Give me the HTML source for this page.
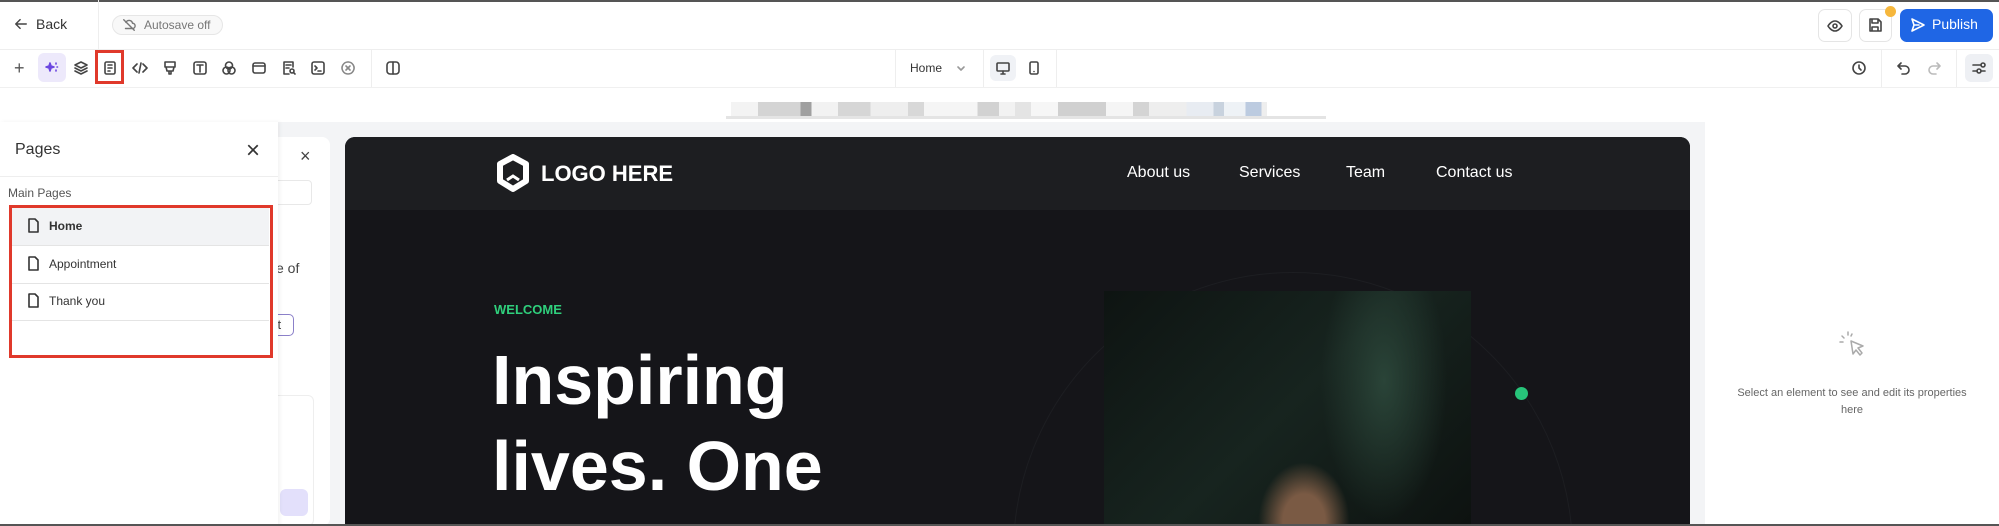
<!DOCTYPE html>
<html style="overflow:hidden;height:526px"><head><meta charset="utf-8"><style>
*{box-sizing:border-box;margin:0;padding:0}
body{width:1999px;height:526px;overflow:hidden;background:#fff;font-family:"Liberation Sans",sans-serif;position:relative;color:#222}
.a{position:absolute}
.ic{position:absolute;width:16px;height:16px;fill:none;stroke:#444;stroke-width:1.6;stroke-linecap:round;stroke-linejoin:round}
</style></head><body>
<div class="a" style="left:0;top:0;width:1999px;height:2px;background:#555"></div>
<!-- top bar -->
<svg class="ic" style="left:14px;top:17px;width:14px;height:14px" viewBox="0 0 16 16"><path d="M14 8H2M7 3L2 8l5 5"/></svg>
<div class="a" style="left:36px;top:16px;font-size:14px;color:#333">Back</div>
<div class="a" style="left:98px;top:0;width:1px;height:49px;background:#eee"></div>
<div class="a" style="left:112px;top:15px;width:111px;height:20px;border:1px solid #e6e6e6;border-radius:10px;background:#f8f8f8"></div>
<svg class="ic" style="left:122px;top:18px;width:14px;height:14px;stroke:#777" viewBox="0 0 16 16"><path d="M4 12h8a3 3 0 0 0 0-6 4 4 0 0 0-7.5-1M2 2l12 12"/></svg>
<div class="a" style="left:144px;top:18px;font-size:12px;color:#777">Autosave off</div>
<div class="a" style="left:1818px;top:9px;width:34px;height:33px;border:1px solid #e5e5e5;border-radius:7px"></div>
<svg class="ic" style="left:1827px;top:18px" viewBox="0 0 16 16"><path d="M1 8s3-5 7-5 7 5 7 5-3 5-7 5-7-5-7-5z"/><circle cx="8" cy="8" r="2"/></svg>
<div class="a" style="left:1859px;top:9px;width:33px;height:33px;border:1px solid #e5e5e5;border-radius:7px"></div>
<svg class="ic" style="left:1867px;top:17px" viewBox="0 0 16 16"><path d="M3 2h8l3 3v9H3zM5 2v4h6V2M5 14v-4h6v4"/></svg>
<div class="a" style="left:1885px;top:6px;width:11px;height:11px;border-radius:50%;background:#f6b73c"></div>
<div class="a" style="left:1900px;top:9px;width:93px;height:33px;border-radius:7px;background:#1f66e5"></div>
<svg class="ic" style="left:1910px;top:17px;stroke:#fff" viewBox="0 0 16 16"><path d="M2 2l12 6-12 6 2-6zM4 8h5"/></svg>
<div class="a" style="left:1932px;top:16px;font-size:14px;color:#fff">Publish</div>
<div class="a" style="left:0;top:49px;width:1999px;height:1px;background:#eee"></div>
<!-- toolbar -->
<div class="a" style="left:38px;top:53px;width:28px;height:29px;border-radius:6px;background:#ede9fb"></div>
<div class="a" style="left:95px;top:50px;width:29px;height:34px;border:3px solid #e0392b"></div>
<div class="a" style="left:14px;top:58px;font-size:18px;color:#555">+</div>
<svg class="ic" style="left:44px;top:60px;stroke:#6b46e0;fill:#6b46e0" viewBox="0 0 16 16"><path d="M6 3l1 3 3 1-3 1-1 3-1-3-3-1 3-1zM12 3v1M12 10v1M13 7h.5"/></svg>
<svg class="ic" style="left:73px;top:60px" viewBox="0 0 16 16"><path d="M8 2l6 3-6 3-6-3zM2 8l6 3 6-3M2 11l6 3 6-3"/></svg>
<svg class="ic" style="left:102px;top:60px" viewBox="0 0 16 16"><rect x="3" y="2" width="10" height="12" rx="1.5"/><path d="M6 5h4M6 8h4M6 11h2"/></svg>
<svg class="ic" style="left:132px;top:60px" viewBox="0 0 16 16"><path d="M5 4L1 8l4 4M11 4l4 4-4 4M9 3L7 13"/></svg>
<svg class="ic" style="left:162px;top:60px" viewBox="0 0 16 16"><path d="M3 2h10v5H3zM4 7l1 4h6l1-4M7 11v3h2v-3"/></svg>
<svg class="ic" style="left:192px;top:60px" viewBox="0 0 16 16"><rect x="2" y="2" width="12" height="12" rx="2"/><path d="M5 5h6M8 5v7"/></svg>
<svg class="ic" style="left:221px;top:60px" viewBox="0 0 16 16"><circle cx="8" cy="5.5" r="3.5"/><circle cx="5.5" cy="10.5" r="3.5"/><circle cx="10.5" cy="10.5" r="3.5"/></svg>
<svg class="ic" style="left:251px;top:60px" viewBox="0 0 16 16"><rect x="2" y="3" width="12" height="10" rx="2"/><path d="M2 6h12"/></svg>
<svg class="ic" style="left:281px;top:60px" viewBox="0 0 16 16"><path d="M12 7V2H3v12h5M5 5h5M5 8h3"/><circle cx="11" cy="11" r="2"/><path d="M12.5 12.5L14 14"/></svg>
<svg class="ic" style="left:310px;top:60px" viewBox="0 0 16 16"><rect x="2" y="2" width="12" height="12" rx="2"/><path d="M5 6l2 2-2 2M8 11h3"/></svg>
<svg class="ic" style="left:340px;top:60px;stroke:#888" viewBox="0 0 16 16"><path d="M8 2a6 6 0 1 0 0.1 0M6 6l4 4M10 6l-4 4"/></svg>
<div class="a" style="left:371px;top:50px;width:1px;height:37px;background:#eee"></div>
<svg class="ic" style="left:385px;top:60px" viewBox="0 0 16 16"><rect x="2" y="2" width="12" height="12" rx="3"/><path d="M8 2v12"/></svg>
<div class="a" style="left:895px;top:50px;width:1px;height:37px;background:#eee"></div>
<div class="a" style="left:910px;top:61px;font-size:12px;color:#333">Home</div>
<svg class="ic" style="left:956px;top:63px;width:10px;height:10px;stroke:#999" viewBox="0 0 10 10"><path d="M2 4l3 3 3-3"/></svg>
<div class="a" style="left:983px;top:50px;width:1px;height:37px;background:#eee"></div>
<div class="a" style="left:990px;top:55px;width:26px;height:26px;border-radius:6px;background:#f0f2f6"></div>
<svg class="ic" style="left:995px;top:60px" viewBox="0 0 16 16"><rect x="2" y="3" width="12" height="8" rx="1"/><path d="M6 14h4M8 11v3"/></svg>
<svg class="ic" style="left:1026px;top:60px" viewBox="0 0 16 16"><rect x="4" y="2" width="8" height="12" rx="1.5"/><path d="M8 11.5h.01"/></svg>
<div class="a" style="left:1056px;top:50px;width:1px;height:37px;background:#eee"></div>
<svg class="ic" style="left:1851px;top:60px" viewBox="0 0 16 16"><circle cx="8" cy="8" r="6"/><path d="M8 5v3l2 2"/></svg>
<div class="a" style="left:1881px;top:50px;width:1px;height:37px;background:#eee"></div>
<svg class="ic" style="left:1896px;top:60px" viewBox="0 0 16 16"><path d="M5 3L2 6l3 3M2 6h7a4 4 0 0 1 0 8H6"/></svg>
<svg class="ic" style="left:1926px;top:60px;stroke:#bbb" viewBox="0 0 16 16"><path d="M11 3l3 3-3 3M14 6H7a4 4 0 0 0 0 8h3"/></svg>
<div class="a" style="left:1956px;top:50px;width:1px;height:37px;background:#eee"></div>
<div class="a" style="left:1965px;top:54px;width:28px;height:28px;border-radius:6px;background:#eef0f4"></div>
<svg class="ic" style="left:1971px;top:60px" viewBox="0 0 16 16"><path d="M2 5h8M2 11h4M10 11h4"/><circle cx="12" cy="5" r="2"/><circle cx="8" cy="11" r="2"/></svg>
<div class="a" style="left:0;top:87px;width:1999px;height:1px;background:#f0f0f0"></div>
<!-- pixel strip -->
<div class="a" style="left:726px;top:116px;width:600px;height:3px;background:#e4e4e4"></div>
<div class="a" style="left:731px;top:102px;width:536px;height:14px;background:linear-gradient(90deg,#f3f3f3 0 5%,#d4d4d4 5% 13%,#a0a0a0 13% 15%,#f2f2f2 15% 20%,#d6d6d6 20% 26%,#eee 26% 33%,#d8d8d8 33% 36%,#f5f5f5 36% 46%,#d2d2d2 46% 50%,#f2f2f2 50% 53%,#e4e4e4 53% 56%,#f6f6f6 56% 61%,#d0d0d0 61% 70%,#f5f5f5 70% 75%,#d4d4d4 75% 78%,#eee 78% 85%,#e8ecf2 85% 90%,#c8d2de 90% 92%,#eef2f6 92% 96%,#bccbe0 96% 99%,#eee 99%)"></div>
<!-- canvas area -->
<div class="a" style="left:0;top:122px;width:1705px;height:404px;background:#f3f4f6"></div>
<div class="a" style="left:1705px;top:122px;width:294px;height:404px;background:#fff"></div>
<!-- secondary panel -->
<div class="a" style="left:250px;top:137px;width:80px;height:389px;background:#fff;border-radius:8px"></div>
<div class="a" style="left:300px;top:146px;font-size:18px;color:#444">×</div>
<div class="a" style="left:270px;top:180px;width:42px;height:25px;border:1px solid #e8e8e8;border-radius:4px"></div>
<div class="a" style="left:276px;top:260px;font-size:14px;color:#444">e of</div>
<div class="a" style="left:260px;top:314px;width:34px;height:22px;border:1px solid #8b80c9;border-radius:5px;font-size:13px;padding:2px 0 0 10px;color:#444">ct</div>
<div class="a" style="left:262px;top:395px;width:52px;height:131px;border:1px solid #eee;border-radius:6px"></div>
<div class="a" style="left:280px;top:489px;width:28px;height:27px;background:#e3e0fb;border-radius:6px"></div>
<!-- pages panel -->
<div class="a" style="left:0;top:122px;width:278px;height:404px;background:#fff;box-shadow:2px 0 4px rgba(0,0,0,.05)"></div>
<div class="a" style="left:15px;top:141px;font-size:16px;color:#333">Pages</div>
<div class="a" style="left:246px;top:137px;font-size:24px;color:#333">×</div>
<div class="a" style="left:0;top:176px;width:278px;height:1px;background:#eee"></div>
<div class="a" style="left:8px;top:186px;font-size:12px;color:#555">Main Pages</div>
<div class="a" style="left:12px;top:208px;width:257px;height:37px;background:#f2f3f5"></div>
<div class="a" style="left:12px;top:245px;width:257px;height:1px;background:#e4e4e4"></div>
<div class="a" style="left:12px;top:283px;width:257px;height:1px;background:#e4e4e4"></div>
<div class="a" style="left:12px;top:320px;width:257px;height:1px;background:#e4e4e4"></div>
<svg class="ic" style="left:27px;top:218px;width:13px;height:15px;stroke:#333" viewBox="0 0 13 15"><path d="M2 1h6l3 3v10H2z"/></svg>
<div class="a" style="left:49px;top:219px;font-size:12px;font-weight:bold;color:#333">Home</div>
<svg class="ic" style="left:27px;top:256px;width:13px;height:15px;stroke:#333" viewBox="0 0 13 15"><path d="M2 1h6l3 3v10H2z"/></svg>
<div class="a" style="left:49px;top:257px;font-size:12px;color:#333">Appointment</div>
<svg class="ic" style="left:27px;top:293px;width:13px;height:15px;stroke:#333" viewBox="0 0 13 15"><path d="M2 1h6l3 3v10H2z"/></svg>
<div class="a" style="left:49px;top:294px;font-size:12px;color:#333">Thank you</div>
<div class="a" style="left:9px;top:205px;width:264px;height:153px;border:3px solid #e0392b"></div>
<!-- dark canvas -->
<div class="a" style="left:345px;top:137px;width:1345px;height:387px;background:#151519;border-radius:10px 10px 0 0;overflow:hidden">
 <div class="a" style="left:0;top:0;width:1345px;height:73px;background:#1d1e21"></div>
 <svg class="a" style="left:151px;top:17px" width="34" height="40" viewBox="0 0 34 40"><path d="M17 3L30 10v17L17 35 4 27V10z" fill="none" stroke="#fff" stroke-width="6" stroke-linejoin="round"/><path d="M11 26l6-4 6 4" fill="none" stroke="#fff" stroke-width="3"/></svg>
 <div class="a" style="left:196px;top:24px;font-size:22px;font-weight:bold;color:#fff">LOGO HERE</div>
 <div class="a" style="left:782px;top:27px;font-size:16px;color:#fff">About us</div>
 <div class="a" style="left:894px;top:27px;font-size:16px;color:#fff">Services</div>
 <div class="a" style="left:1001px;top:27px;font-size:16px;color:#fff">Team</div>
 <div class="a" style="left:1091px;top:27px;font-size:16px;color:#fff">Contact us</div>
 <div class="a" style="left:668px;top:135px;width:560px;height:560px;border:1px solid #1d1e22;border-radius:50%"></div>
 <div class="a" style="left:149px;top:165px;font-size:13px;font-weight:bold;color:#2fcf7c">WELCOME</div>
 <div class="a" style="left:147px;top:200px;font-size:70px;font-weight:bold;color:#fff;line-height:86px">Inspiring<br>lives. One</div>
 <div class="a" style="left:759px;top:154px;width:367px;height:233px;background:radial-gradient(ellipse 70px 90px at 200px 230px,#7a5a44 0 30%,transparent 65%),radial-gradient(ellipse 90px 200px at 280px 90px,#2a4438,transparent 70%),linear-gradient(135deg,#0e1412,#17241f 50%,#0d1210)"></div>
 <div class="a" style="left:1170px;top:250px;width:13px;height:13px;border-radius:50%;background:#27c47a"></div>
</div>
<!-- right panel -->
<svg class="ic" style="left:1838px;top:330px;width:30px;height:30px;stroke:#aaa;stroke-width:1.5" viewBox="0 0 30 30"><path d="M13 11l12 5-5 2 4 5-2 2-4-5-3 4z"/><path d="M10 2v3M4 6l2 2M2 12h3M14 4l-1 2"/></svg>
<div class="a" style="left:1705px;top:385px;width:294px;text-align:center;font-size:11px;line-height:17px;color:#666">Select an element to see and edit its properties<br>here</div>
<div class="a" style="left:0;top:524px;width:1999px;height:2px;background:#555"></div>
</body></html>
